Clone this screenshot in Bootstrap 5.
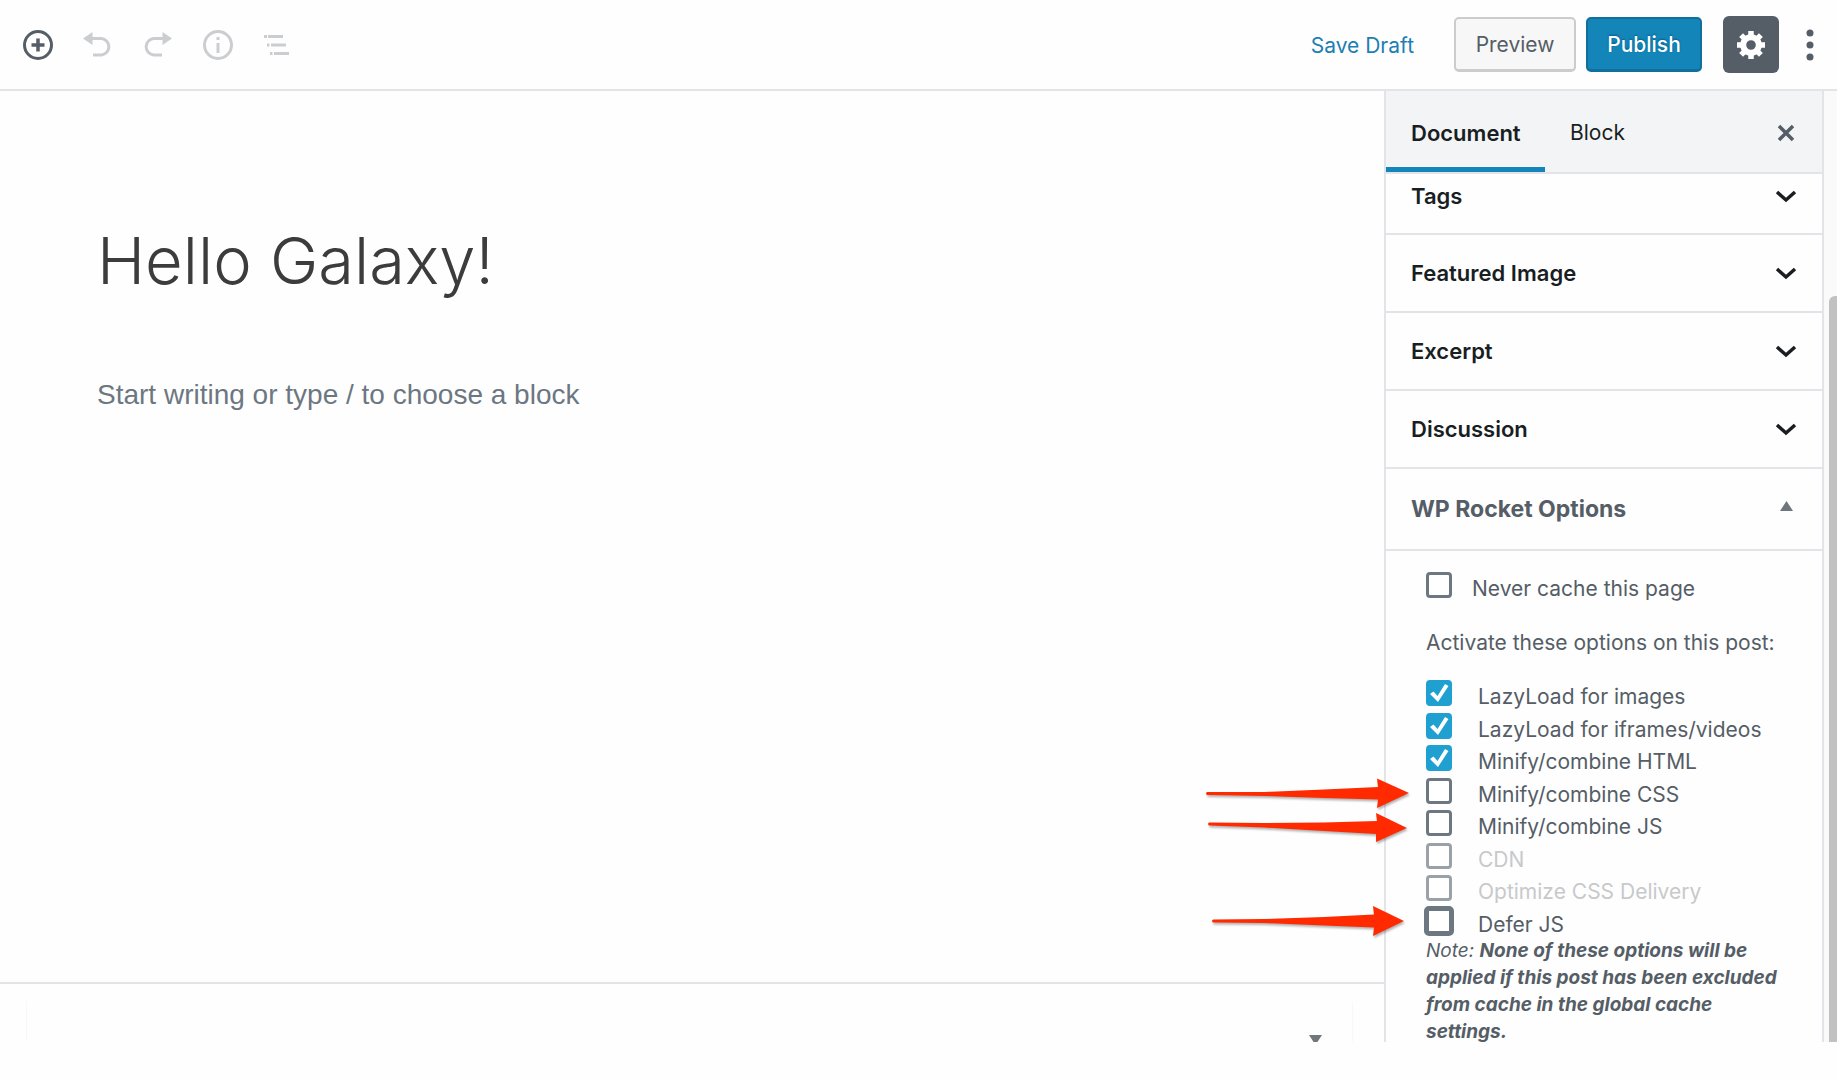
<!DOCTYPE html>
<html lang="en">
<head>
<meta charset="utf-8">
<meta name="viewport" content="width=device-width, initial-scale=1">
<title>Edit Post</title>
<link href="https://cdn.jsdelivr.net/npm/bootstrap@5.3.0/dist/css/bootstrap.min.css" rel="stylesheet">
<style>
  :root { --line: #e2e4e7; --ink: #191e23; --slate: #555d66; --brand: #1485b9; }
  body { font-family: Inter, "Liberation Sans", sans-serif; font-size: 21px; line-height: 32px; color: var(--slate); background: #fefefe; }
  .editor-app { height: calc(100vh - 38px); }
  .editor-bar { height: 91px; border-bottom: 2px solid var(--line); padding: 0 8px; }
  .tool-set { gap: 28px; padding-left: 14px; }
  .tool-btn { min-width: 32px; height: 60px; padding: 0; border: 0; background: none; color: var(--slate); display: flex; align-items: center; justify-content: center; }
  .tool-btn:disabled { color: #cbcdd0; }
  .draft-link { color: #1c7fb3; text-decoration: none; margin-right: 40px; padding-top: 2px; }
  .bar-btn { height: 55px; border-radius: 5px; font-size: 21px; padding: 2px 0 0; margin-right: 10px; }
  .preview-btn { width: 122px; color: var(--slate); background: #f7f7f7; border: 2px solid #ccc; border-bottom-width: 3px; }
  .publish-btn { width: 116px; color: #fff; background: var(--brand); border: 2px solid #106f9b; border-bottom-width: 3px; font-weight: 500; text-shadow: 0 -1px 2px #005d8c; }
  .gear-btn { width: 56px; height: 57px; padding: 0; border: 0; border-radius: 6px; background: var(--slate); color: #fff; margin-left: 11px; }
  .more-btn { width: 38px; margin-left: 12px; }
  .canvas-pane { min-width: 0; }
  .title-field, .para-field { border: 0; background: none; padding: 0; width: 100%; outline: 0; font-family: Inter, "Liberation Sans", sans-serif; }
  .title-field { font-size: 65px; font-weight: 300; line-height: 80px; color: #3c3c3c; margin-top: 130px; padding-left: 97px; }
  .para-field { font-family: "Liberation Sans", Arial, sans-serif; font-size: 28px; line-height: 40px; margin-top: 74px; padding-left: 97px; }
  .para-field::placeholder { color: #6c7781; opacity: 1; }
  .meta-area { height: 60px; border-top: 2px solid var(--line); padding: 18px 31px 0 26px; overflow: hidden; }
  .meta-box { border: solid #f8f8f9; border-width: 0 1px; height: 60px; padding: 33px 30px 0 0; }
  .side-pane { width: 440px; border: solid var(--line); border-width: 0 2px; }
  .side-tabs { height: 83px; background: #f3f4f5; border-bottom: 2px solid var(--line); }
  .side-tab { border: 0; background: none; color: var(--ink); padding: 8px 25px 0; border-bottom: 5px solid transparent; }
  .side-tab.active { font-weight: 600; font-size: 22px; border-bottom-color: var(--brand); width: 159px; padding-right: 0; text-align: left; }
  .close-btn { width: 60px; padding: 0; border: 0; background: none; color: var(--slate); margin-right: 6px; }
  .fold-btn { flex: none; width: 100%; height: 78px; padding: 0 24px 0 25px; background: none; border: 0; border-bottom: 2px solid var(--line); color: var(--ink); font-size: 22px; font-weight: 600; text-align: left; }
  .fold-first { height: 61px; padding-bottom: 16px; }
  .fold-meta { height: 82px; font-size: 23px; font-weight: 700; color: var(--slate); }
  .meta-body { padding: 21px 37px 0 40px; }
  .meta-body label { line-height: 24px; white-space: nowrap; }
  .box-input { appearance: none; flex: none; width: 26px; height: 26px; margin: 0; border: 3px solid #6c7781; border-radius: 4px; background: #fff center/26px no-repeat; }
  .box-input:disabled { border-color: #9aa1a9; }
  .box-input:checked { border-color: #1fa0d0; background-color: #1fa0d0; background-image: url("data:image/svg+xml,%3Csvg xmlns='http://www.w3.org/2000/svg' viewBox='0 0 26 26'%3E%3Cpath d='M4 14l3.500-2.500 4 4.500L19 4l3.500 2L12 22z' fill='%23fff'/%3E%3C/svg%3E"); background-origin: border-box; }
  .box-focus { width: 30px; height: 30px; border-width: 5px; margin: 0 -2px; border-radius: 5px; }
  .opt-row { position: relative; height: 32px; }
  .opt-row:nth-child(odd) { margin-bottom: 1px; }
  .opt-row label { padding: 8px 0 0 26px; }
  .never-row { margin-bottom: 26px; }
  .never-row label { padding: 5px 0 0 20px; }
  .lead-in { margin-bottom: 18px; }
  .dim-label { color: #c8c9cb; }
  .pointer-arrow { position: absolute; right: 100%; top: 50%; width: 206px; height: 36px; margin: -17px 16px 0 0; filter: drop-shadow(1px 2px 1px rgba(0,0,0,.3)); }
  .note-text { font-size: 19px; line-height: 27px; font-style: italic; }
  .scroll-rail { width: 13px; background: #fafafa; padding: 205px 0 0 5px; }
  .scroll-thumb { height: 100%; background: #c1c1c1; border-radius: 6px 0 0 0; }
</style>
<script src="https://cdn.jsdelivr.net/npm/bootstrap@5.3.0/dist/js/bootstrap.bundle.min.js" defer></script>
</head>
<body>
<div class="editor-app d-flex flex-column overflow-hidden">
  <header class="editor-bar d-flex align-items-center flex-shrink-0">
    <div class="tool-set d-flex">
      <button class="tool-btn" type="button" aria-label="Add block"><svg width="32" height="32" viewBox="0 0 32 32" fill="none" stroke="currentColor"><circle cx="16" cy="16" r="13.5" stroke-width="3"/><path d="M16 9.500v13M9.500 16h13" stroke-width="3.500"/></svg></button>
      <button class="tool-btn" type="button" disabled aria-label="Undo"><svg width="32" height="32" viewBox="0 0 32 32"><path d="M1 9.500 10.500 3v13z" fill="currentColor"/><path d="M9 9.500h10.500a8.300 8.300 0 0 1 0 16.500H11" fill="none" stroke="currentColor" stroke-width="3"/></svg></button>
      <button class="tool-btn" type="button" disabled aria-label="Redo"><svg width="32" height="32" viewBox="0 0 32 32"><path d="M30 9.500 20.500 3v13z" fill="currentColor"/><path d="M22 9.500H11.500a8.300 8.300 0 0 0 0 16.500H20" fill="none" stroke="currentColor" stroke-width="3"/></svg></button>
      <button class="tool-btn" type="button" disabled aria-label="Content structure"><svg width="32" height="32" viewBox="0 0 32 32" fill="none" stroke="currentColor"><circle cx="16" cy="16" r="13.500" stroke-width="3"/><path d="M16 14v10M16 8v3" stroke-width="3"/></svg></button>
      <button class="tool-btn" type="button" disabled aria-label="Block navigation"><svg width="32" height="32" viewBox="0 0 32 32" fill="currentColor"><path d="M2 6h3v3H2zM6 6h15v3H6zM5 14.500h2.500v3H5zM9 14.500h15v3H9zM8 23h2.500v3H8zM12 23h15v3H12z"/></svg></button>
    </div>
    <a class="draft-link ms-auto" href="#">Save Draft</a>
    <button class="bar-btn preview-btn" type="button">Preview</button>
    <button class="bar-btn publish-btn" type="button">Publish</button>
    <button class="gear-btn d-flex align-items-center justify-content-center" type="button" aria-label="Settings"><svg width="30" height="30" viewBox="0 0 30 30" fill="none" stroke="#fff"><circle cx="15" cy="15" r="7.800" stroke-width="6"/><path d="M15 1v4M15 25v4M1 15h4M25 15h4M5.100 5.100l3 3M21.900 21.900l3 3M5.100 24.900l3-3M21.900 8.100l3-3" stroke-width="5.500"/></svg></button>
    <button class="tool-btn more-btn" type="button" aria-label="More tools"><svg width="8" height="32" viewBox="0 0 8 32" fill="currentColor"><circle cx="4" cy="4" r="3.500"/><circle cx="4" cy="16" r="3.500"/><circle cx="4" cy="28" r="3.500"/></svg></button>
  </header>

  <div class="d-flex flex-fill overflow-hidden">
    <main class="canvas-pane d-flex flex-column flex-fill">
      <input class="title-field" type="text" aria-label="Title" value="Hello Galaxy!">
      <input class="para-field" type="text" aria-label="Paragraph" placeholder="Start writing or type / to choose a block">
      <div class="meta-area mt-auto flex-shrink-0">
        <div class="meta-box d-flex justify-content-end align-items-start">
          <svg width="13" height="11" viewBox="0 0 13 11"><path d="M0 0h13L6.500 10z" fill="#72777c"/></svg>
        </div>
      </div>
    </main>

    <aside class="side-pane d-flex flex-column flex-shrink-0">
      <div class="side-tabs d-flex flex-shrink-0">
        <button class="side-tab active" type="button">Document</button>
        <button class="side-tab" type="button">Block</button>
        <button class="close-btn ms-auto" type="button" aria-label="Close settings"><svg width="18" height="18" viewBox="0 0 18 18"><path d="M2 2l14 14M16 2 2 16" stroke="currentColor" stroke-width="3.500"/></svg></button>
      </div>
      <div class="d-flex flex-column flex-fill">
        <button class="fold-btn fold-first d-flex align-items-center justify-content-between" type="button">Tags <svg width="24" height="24" viewBox="0 0 24 24"><path d="M3 8l9 8 9-8" fill="none" stroke="currentColor" stroke-width="3.500"/></svg></button>
        <button class="fold-btn d-flex align-items-center justify-content-between" type="button">Featured Image <svg width="24" height="24" viewBox="0 0 24 24"><path d="M3 8l9 8 9-8" fill="none" stroke="currentColor" stroke-width="3.500"/></svg></button>
        <button class="fold-btn d-flex align-items-center justify-content-between" type="button">Excerpt <svg width="24" height="24" viewBox="0 0 24 24"><path d="M3 8l9 8 9-8" fill="none" stroke="currentColor" stroke-width="3.500"/></svg></button>
        <button class="fold-btn d-flex align-items-center justify-content-between" type="button">Discussion <svg width="24" height="24" viewBox="0 0 24 24"><path d="M3 8l9 8 9-8" fill="none" stroke="currentColor" stroke-width="3.500"/></svg></button>
        <button class="fold-btn fold-meta d-flex align-items-center justify-content-between" type="button">WP Rocket Options <svg width="24" height="24" viewBox="0 0 24 24"><path d="M6 14h13L12.500 4z" fill="#6f757c"/></svg></button>
        <div class="meta-body">
          <div class="never-row d-flex align-items-start">
            <input class="box-input" type="checkbox" id="never"><label for="never">Never cache this page</label>
          </div>
          <p class="lead-in text-nowrap">Activate these options on this post:</p>
          <div>
            <div class="opt-row d-flex align-items-center"><input class="box-input" type="checkbox" id="o1" checked><label for="o1">LazyLoad for images</label></div>
            <div class="opt-row d-flex align-items-center"><input class="box-input" type="checkbox" id="o2" checked><label for="o2">LazyLoad for iframes/videos</label></div>
            <div class="opt-row d-flex align-items-center"><input class="box-input" type="checkbox" id="o3" checked><label for="o3">Minify/combine HTML</label></div>
            <div class="opt-row d-flex align-items-center"><input class="box-input" type="checkbox" id="o4"><label for="o4">Minify/combine CSS</label>
              <svg class="pointer-arrow" viewBox="0 0 206 36"><path d="M3 21q-2-1.500 0-3L60 18 120 15.500 174 13 173 4.500 205 19 173 34l1-8.500L120 24 60 22z" fill="#ff2a00"/></svg></div>
            <div class="opt-row d-flex align-items-center"><input class="box-input" type="checkbox" id="o5"><label for="o5">Minify/combine JS</label>
              <svg class="pointer-arrow" viewBox="0 0 206 36"><path d="M5 19.500q-2-1.500 0-3L60 17 120 16.500 173 15 172 7 203 22 172 36l0-8L120 25 60 21.500z" fill="#ff2a00"/></svg></div>
            <div class="opt-row d-flex align-items-center"><input class="box-input" type="checkbox" id="o6" disabled><label class="dim-label" for="o6">CDN</label></div>
            <div class="opt-row d-flex align-items-center"><input class="box-input" type="checkbox" id="o7" disabled><label class="dim-label" for="o7">Optimize CSS Delivery</label></div>
            <div class="opt-row d-flex align-items-center"><input class="box-input box-focus" type="checkbox" id="o8"><label for="o8">Defer JS</label>
              <svg class="pointer-arrow" viewBox="0 0 206 36"><path d="M9 18.500q-2-1.500 0-3L60 15 120 13 170 10.500 169 2 200 17 169 32l1-8.500L120 21.500 60 19z" fill="#ff2a00"/></svg></div>
          </div>
          <p class="note-text mb-0">Note: <strong>None of these options will be applied if this post has been excluded from cache in the global cache settings.</strong></p>
        </div>
      </div>
    </aside>
    <div class="scroll-rail flex-shrink-0"><div class="scroll-thumb"></div></div>
  </div>
</div>
</body>
</html>
